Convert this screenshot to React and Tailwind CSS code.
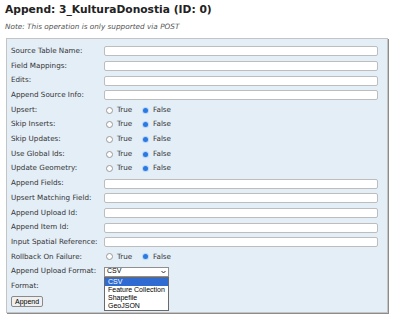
const rows = [
  { label: "Source Table Name:", type: "text" },
  { label: "Field Mappings:", type: "text" },
  { label: "Edits:", type: "text" },
  { label: "Append Source Info:", type: "text" },
  { label: "Upsert:", type: "radio" },
  { label: "Skip Inserts:", type: "radio" },
  { label: "Skip Updates:", type: "radio" },
  { label: "Use Global Ids:", type: "radio" },
  { label: "Update Geometry:", type: "radio" },
  { label: "Append Fields:", type: "text" },
  { label: "Upsert Matching Field:", type: "text" },
  { label: "Append Upload Id:", type: "text" },
  { label: "Append Item Id:", type: "text" },
  { label: "Input Spatial Reference:", type: "text" },
  { label: "Rollback On Failure:", type: "radio" },
  { label: "Append Upload Format:", type: "select" },
  { label: "Format:", type: "none" },
]

const Radio = ({ checked }) =>
  checked ? (
    <span className="flex h-[7px] w-[7px] shrink-0 items-center justify-center rounded-full bg-[#bcd6f7]">
      <span className="block h-[5px] w-[5px] rounded-full bg-[#2a7ae2]" />
    </span>
  ) : (
    <span className="block h-[7px] w-[7px] shrink-0 rounded-full border border-[#9a9a9a] bg-white" />
  )

const RadioPair = () => (
  <div className="flex items-center">
    <span className="ml-[2px] block"><Radio /></span>
    <span className="ml-[4px] w-[25px]">True</span>
    <span className="block"><Radio checked /></span>
    <span className="ml-[4px]">False</span>
  </div>
)

const Field = ({ type }) => {
  if (type === "text") {
    return <div className="h-[10px] w-[274px] rounded-[2px] border border-[#bdbdbd] bg-white" />
  }
  if (type === "radio") return <RadioPair />
  if (type === "select") {
    return (
      <div className="relative">
        <div className="flex h-[10px] w-[65px] items-center justify-between border border-[#8f8f8f] bg-white pl-[2px] pr-[2px] font-['Liberation_Sans',sans-serif] text-[7px] text-black">
          <span>CSV</span>
          <svg width="5" height="4" viewBox="0 0 5 4">
            <path d="M0.5 1 L2.5 3 L4.5 1" stroke="#333" strokeWidth="1" fill="none" />
          </svg>
        </div>
        <div className="absolute left-0 top-[10px] z-10 w-[65px] border border-[#6a6a6a] bg-white font-['Liberation_Sans',sans-serif] text-[7px] leading-[8px] text-black">
          <div className="bg-[#2f6bd1] pl-[3px] text-white">CSV</div>
          <div className="pl-[3px]">Feature Collection</div>
          <div className="pl-[3px]">Shapefile</div>
          <div className="pl-[3px]">GeoJSON</div>
        </div>
      </div>
    )
  }
  return null
}

const App = () => {
  return (
    <div className="h-[323px] w-[400px] bg-white font-['DejaVu_Sans',Verdana,sans-serif] text-[#333]">
      <div className="px-[5px] pt-[3px]">
        <h2 className="text-[10.7px] font-bold leading-[13px] text-[#222]">Append: 3_KulturaDonostia (ID: 0)</h2>
        <p className="mt-[6px] text-[7.3px] italic leading-[9px] text-[#555]">Note: This operation is only supported via POST</p>
      </div>
      <div className="ml-[6px] mt-[7px] w-[382px] border border-[#c4c4c4] bg-[#e4eef7] px-[4px] pb-[4px] pt-[5px] shadow-[1px_1px_0_#8c8c8c]">
        {rows.map((r) => (
          <div key={r.label} className="flex h-[14.7px] items-center text-[7.2px]">
            <div className="w-[93px] whitespace-nowrap">{r.label}</div>
            <Field type={r.type} />
          </div>
        ))}
        <div className="flex h-[14.7px] items-center">
          <button className="h-[11px] rounded-[2px] border border-[#8a8a8a] bg-[#efefef] px-[3px] font-['Liberation_Sans',sans-serif] text-[7px] leading-[9px] text-black">
            Append
          </button>
        </div>
      </div>
    </div>
  )
}

export default App
